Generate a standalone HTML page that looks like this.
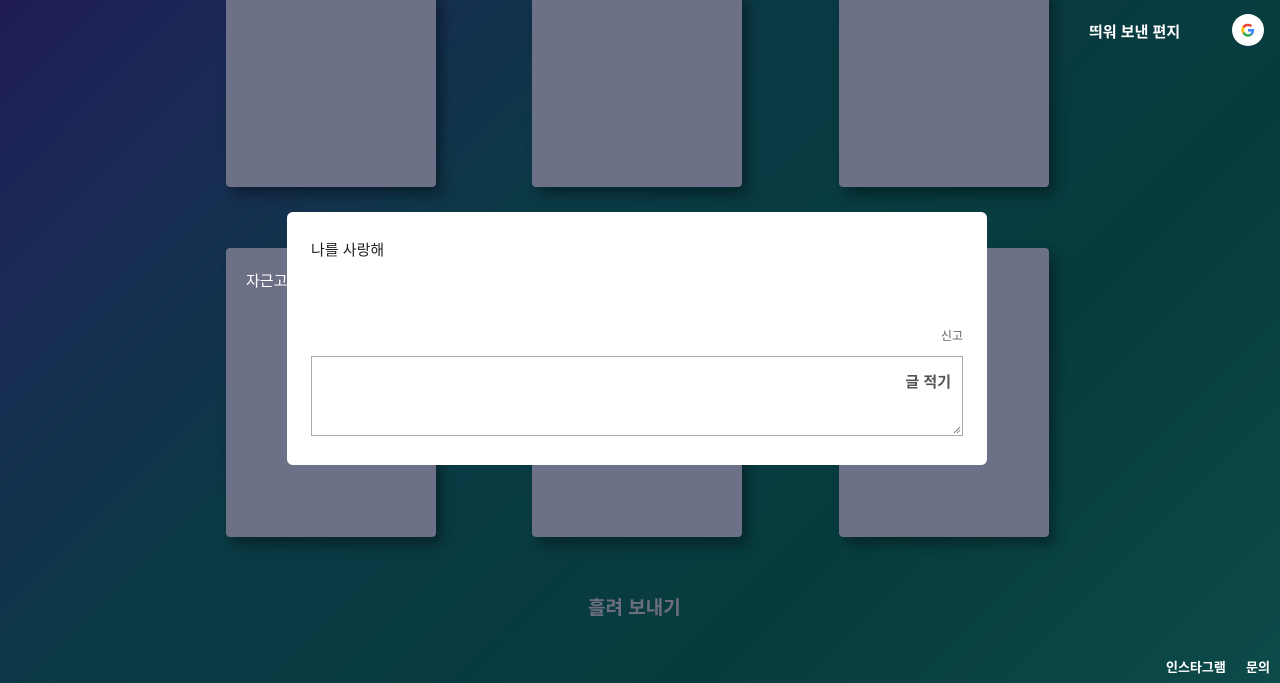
<!DOCTYPE html>
<html><head><meta charset="utf-8"><style>
*{margin:0;padding:0;box-sizing:border-box}
body{width:1280px;height:683px;overflow:hidden;position:relative;font-family:"Liberation Sans","Noto Sans CJK KR",sans-serif;
background:linear-gradient(135deg,#1f1b55 0%,#1a2a55 15%,#0b3a45 38%,#073c3e 70%,#0d4a4a 100%);}
.card{position:absolute;width:210px;background:#6d7187;border-radius:4px;box-shadow:6px 8px 12px rgba(0,0,0,.35)}
.top{top:-10px;height:197px}
.bot{top:248px;height:289px}
.hdr{position:absolute;top:21px;left:1089px;color:#fff;font-weight:bold;font-size:15px}
.g{position:absolute;left:1232px;top:14px;width:32px;height:32px;border-radius:50%;background:#fff}
.modal{position:absolute;left:287px;top:212px;width:700px;height:253px;background:#fff;border-radius:6px}
.foot{position:absolute;top:657px;color:#fff;font-weight:bold;font-size:13px}
</style></head><body>
<div class="card top" style="left:226px"></div>
<div class="card top" style="left:532px"></div>
<div class="card top" style="left:839px"></div>
<div class="card bot" style="left:226px"><div style="color:#fff;font-size:15px;padding:22px 0 0 20px">자근고</div></div>
<div class="card bot" style="left:532px"></div>
<div class="card bot" style="left:839px"></div>
<div class="hdr">띄워 보낸 편지</div>
<div class="g"><svg width="32" height="32" viewBox="0 0 32 32"><path d="M16 9.7a6.3 6.3 0 0 1 4.2 1.6l-1.8 1.8A3.8 3.8 0 0 0 12.6 14l-2.1-1.6A6.3 6.3 0 0 1 16 9.7z" fill="#ea4335"/><path d="M10.5 12.4l2.1 1.6a3.8 3.8 0 0 0 0 4l-2.1 1.6a6.3 6.3 0 0 1 0-7.2z" fill="#fbbc05"/><path d="M12.6 18a3.8 3.8 0 0 0 5.5 1.6l2 1.6A6.3 6.3 0 0 1 10.5 19.6z" fill="#34a853"/><path d="M22.2 15H16v2.6h3.4a3 3 0 0 1-1.3 2l2 1.6c1.4-1.3 2.2-3.3 2.1-6.2z" fill="#4285f4"/></svg></div>
<div class="modal">
<div style="position:absolute;left:24px;top:27px;font-size:15px;color:#222">나를 사랑해</div>
<div style="position:absolute;right:24px;top:115px;font-size:12px;color:#666">신고</div>
<div style="position:absolute;left:24px;top:144px;width:652px;height:80px;border:1px solid #aaa;">
<div style="position:absolute;right:11px;top:14px;font-size:15px;color:#555;font-weight:bold">글 적기</div>
<svg style="position:absolute;right:1px;bottom:1px" width="8" height="8"><path d="M7 1L1 7M7 4L4 7" stroke="#888" stroke-width="1"/></svg></div>
</div>
<div style="position:absolute;left:588px;top:593px;font-size:19px;font-weight:bold;color:#6c6e80">흘려 보내기</div>
<div class="foot" style="left:1166px">인스타그램</div>
<div class="foot" style="left:1246px">문의</div>
</body></html>
